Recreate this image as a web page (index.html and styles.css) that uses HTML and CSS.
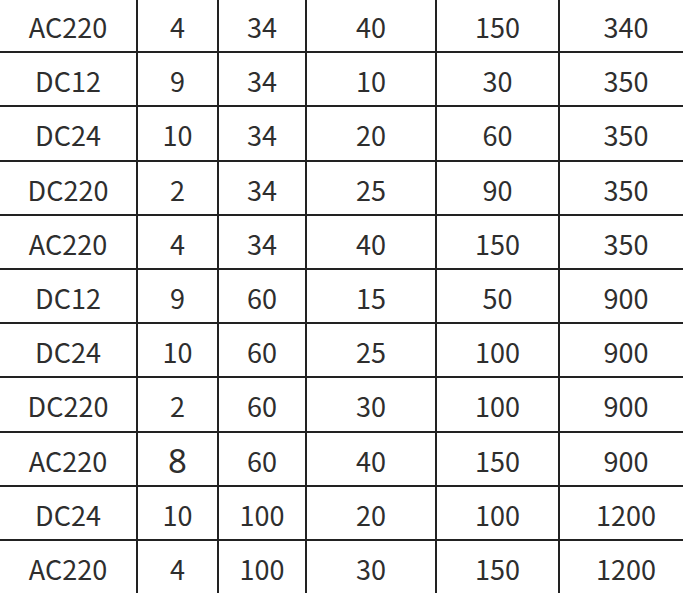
FILE: index.html
```html
<!DOCTYPE html>
<html lang="zh">
<head>
<meta charset="utf-8">
<link rel="stylesheet" href="styles.css">
</head>
<body>
<table class="spec">
<colgroup>
<col class="c1"><col class="c2"><col class="c3"><col class="c4"><col class="c5"><col class="c6">
</colgroup>
<tbody>
<tr><td>AC220</td><td>4</td><td>34</td><td>40</td><td>150</td><td>340</td></tr>
<tr><td>DC12</td><td>9</td><td>34</td><td>10</td><td>30</td><td>350</td></tr>
<tr><td>DC24</td><td>10</td><td>34</td><td>20</td><td>60</td><td>350</td></tr>
<tr><td>DC220</td><td>2</td><td>34</td><td>25</td><td>90</td><td>350</td></tr>
<tr><td>AC220</td><td>4</td><td>34</td><td>40</td><td>150</td><td>350</td></tr>
<tr><td>DC12</td><td>9</td><td>60</td><td>15</td><td>50</td><td>900</td></tr>
<tr><td>DC24</td><td>10</td><td>60</td><td>25</td><td>100</td><td>900</td></tr>
<tr><td>DC220</td><td>2</td><td>60</td><td>30</td><td>100</td><td>900</td></tr>
<tr><td>AC220</td><td><span class="big">8</span></td><td>60</td><td>40</td><td>150</td><td>900</td></tr>
<tr><td>DC24</td><td>10</td><td>100</td><td>20</td><td>100</td><td>1200</td></tr>
<tr><td>AC220</td><td>4</td><td>100</td><td>30</td><td>150</td><td>1200</td></tr>
</tbody>
</table>
</body>
</html>
```
FILE: styles.css
```css
html {
  overflow: hidden;
  background: #fff;
}
body {
  margin: 0;
  background: #fff;
}
.spec {
  border-collapse: collapse;
  table-layout: fixed;
  width: 694px;
  margin-top: -3px;
  margin-left: -2px;
  font-family: "Noto Sans CJK SC", "Noto Sans", sans-serif;
  font-size: 27px;
  color: #2e2e2e;
}
.c1 { width: 138px; }
.c2 { width: 81px; }
.c3 { width: 88px; }
.c4 { width: 130px; }
.c5 { width: 123px; }
.c6 { width: 134px; }
.spec tr {
  height: 54.2px;
}
.spec td {
  border: 2px solid #222;
  padding: 3px 0 0;
  text-align: center;
  vertical-align: middle;
  line-height: 1;
}
.big {
  font-family: "Noto Sans", sans-serif;
  font-size: 33px;
  font-weight: 400;
}
```
